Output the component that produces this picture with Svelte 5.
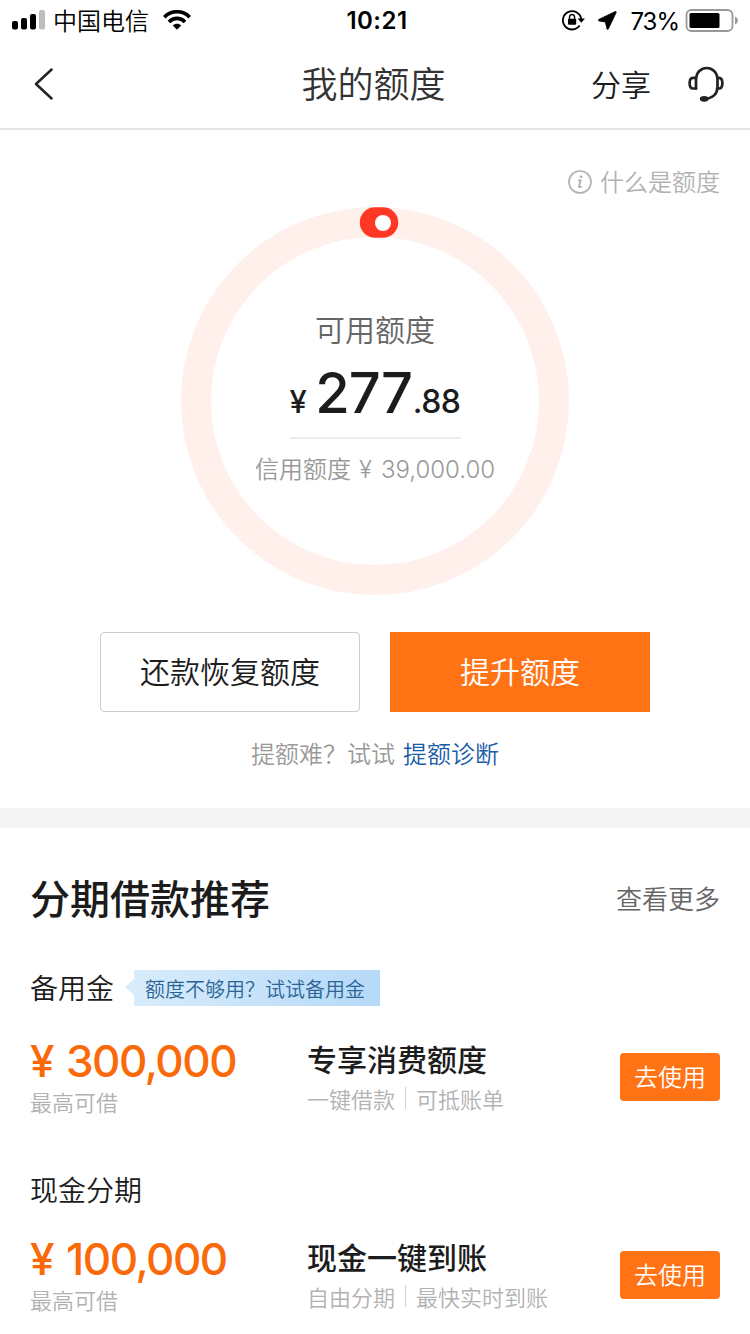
<script>
    let available = { whole: '277', cents: '.88' };

    let products = [
        {
            name: '备用金',
            tip: '额度不够用？试试备用金',
            amount: '300,000',
            title: '专享消费额度',
            tags: ['一键借款', '可抵账单'],
        },
        {
            name: '现金分期',
            tip: '',
            amount: '100,000',
            title: '现金一键到账',
            tags: ['自由分期', '最快实时到账'],
        },
    ];
</script>

<div class="page">
    <div class="status">
        <div class="status-left">
            <svg width="34" height="22" viewBox="0 0 34 22">
                <rect x="0" y="12" width="6" height="8.5" rx="2" />
                <rect x="9" y="9" width="6" height="11.5" rx="2" />
                <rect x="18" y="5" width="6" height="15.5" rx="2" />
                <rect x="27" y="1" width="6" height="19.5" rx="2" fill="#bdbdbd" />
            </svg>
            <span class="carrier">中国电信</span>
            <svg width="28" height="20" viewBox="0 0 28 20" fill="none" stroke="#000" stroke-width="3.6">
                <path d="M1.3 7.2 C8 -.1 20 -.1 26.7 7.2" />
                <path d="M6 12 C10.4 7.2 17.6 7.2 22 12" />
                <path d="M9.8 15.6 C12 13.2 16 13.2 18.2 15.6 L14 19.8 Z" fill="#000" stroke="none" />
            </svg>
        </div>
        <span class="time">10:21</span>
        <div class="status-right">
            <svg width="24" height="22" viewBox="0 0 24 22" fill="none" stroke="#000" stroke-width="1.8">
                <path d="M17.6 15.6 A9.2 9.2 0 1 1 19.2 9" />
                <path d="M15.6 8.5 H23 L19.3 12.8 Z" fill="#000" stroke="none" />
                <rect x="6" y="8.8" width="8.2" height="6" rx="1" fill="#000" stroke="none" />
                <path d="M7.5 9.4 V7.4 A2.5 2.8 0 0 1 12.6 7.4 V9.4" stroke-width="1.4" />
            </svg>
            <svg class="arrow" width="19" height="19" viewBox="0 0 19 19">
                <path d="M17.2 .6 L.8 8.4 Q-.1 9.6 1 10 L7.4 11 L9 18 Q9.6 19 10.3 18 L18.2 1.4 Q18.4 .2 17.2 .6 Z" stroke="#000" stroke-width=".8" />
            </svg>
            <span class="percent">73%</span>
            <svg width="54" height="24" viewBox="0 0 54 24">
                <rect x="1.5" y="1" width="46" height="21" rx="5" fill="none" stroke="#999" stroke-width="1.8" />
                <rect x="4.5" y="4" width="30" height="15" rx="1.5" />
                <path d="M50 7.5 Q53 9 53 11.5 Q53 14 50 15.5 Z" fill="#999" />
            </svg>
        </div>
    </div>

    <header>
        <button class="back" aria-label="返回">
            <svg width="22" height="34" viewBox="0 0 22 34" fill="none" stroke="#222" stroke-width="2.5" stroke-linecap="round" stroke-linejoin="round">
                <path d="M18.6 2.5 L3 17 L18.6 31.5" />
            </svg>
        </button>
        <h1>我的额度</h1>
        <div class="actions">
            <span>分享</span>
            <svg width="36" height="36" viewBox="0 0 36 36" fill="none" stroke="#222" stroke-width="2.7" stroke-linecap="round" stroke-linejoin="round">
                <path d="M8 22.5 V14 C8 -2 29.5 -2 29.5 14 V22 C29 28 24.5 32 17 33" />
                <path d="M8 11.8 H5 Q1.6 12 1.6 17 Q1.6 22.5 5 22.5 H8" />
                <path d="M29.5 11.8 H31 Q34.4 12 34.4 17 Q34.4 22.5 31 22.5 H29" />
                <ellipse cx="16.2" cy="32.8" rx="3" ry="1.5" fill="#222" />
            </svg>
        </div>
    </header>

    <section class="quota">
        <div class="help">
            <svg width="24" height="24" viewBox="0 0 24 24" fill="none" stroke="#b2b2b2" stroke-width="1.7">
                <circle cx="12" cy="12" r="11" />
                <path d="M10 10.3 H12.6 L11 16.7 Q11 17.8 14 16.5" stroke-width="1.8" />
                <circle cx="13" cy="6.8" r="1.4" fill="#b2b2b2" stroke="none" />
            </svg>
            <span>什么是额度</span>
        </div>

        <div class="gauge">
            <svg class="ring" width="390" height="390" viewBox="0 0 390 390" fill="none">
                <circle cx="195" cy="195" r="179" stroke="#fff0ec" stroke-width="30" />
                <path d="M195 16.5 H203" stroke="#fe3824" stroke-width="30.5" stroke-linecap="round" />
                <circle cx="203" cy="17" r="8" fill="#fff" />
            </svg>
            <div class="balance">
                <div class="label">可用额度</div>
                <div class="money">
                    <span class="sign">¥</span>
                    <span class="whole">{available.whole}</span>
                    <span class="cents">{available.cents}</span>
                </div>
                <div class="total">信用额度<span class="total-sign">¥</span><span class="total-num">39,000.00</span></div>
            </div>
        </div>

        <div class="buttons">
            <button class="plain">还款恢复额度</button>
            <button class="primary">提升额度</button>
        </div>
        <p class="hint">提额难？试试<a href="#diagnose">提额诊断</a></p>
    </section>

    <section class="loans">
        <div class="loans-head">
            <h2>分期借款推荐</h2>
            <span>查看更多</span>
        </div>
        {#each products as product}
            <article>
                <div class="name">
                    <span>{product.name}</span>
                    {#if product.tip}
                        <svg class="beak" width="9" height="16" viewBox="0 0 9 16"><path d="M0 8 L9 0 V16 Z" fill="#d8ecfb" /></svg>
                        <span class="tip">{product.tip}</span>
                    {/if}
                </div>
                <div class="row">
                    <div class="limit">
                        <div class="amount"><span>¥</span>{product.amount}</div>
                        <div class="note">最高可借</div>
                    </div>
                    <div class="info">
                        <div class="title">{product.title}</div>
                        <div class="tags">
                            <span>{product.tags[0]}</span>
                            <i></i>
                            <span>{product.tags[1]}</span>
                        </div>
                    </div>
                    <button class="use">去使用</button>
                </div>
            </article>
        {/each}
    </section>
</div>

<style>
    :global(body) {
        margin: 0;
        background: #fff;
    }

    .page {
        width: 750px;
        height: 1334px;
        overflow: hidden;
        background: #fff;
        color: #1c1c1c;
        font-family: 'Noto Sans CJK SC', sans-serif;
        font-weight: 350;
    }

    .page * {
        box-sizing: border-box;
    }

    svg {
        display: block;
        flex: none;
    }

    button {
        padding: 0;
        border: 0;
        background: none;
        font: inherit;
        cursor: pointer;
    }

    .status {
        display: grid;
        grid-template-columns: 1fr auto 1fr;
        align-items: center;
        height: 40px;
        padding: 0 11px 0 12px;
        color: #000;
    }

    .status-left,
    .status-right {
        display: flex;
        align-items: center;
    }

    .status-right {
        justify-content: flex-end;
        padding-top: 1px;
    }

    .carrier {
        margin: 0 14px 0 7px;
        font-size: 24px;
        line-height: 40px;
    }

    .time {
        padding: 1px 0 0 3px;
        font-family: Inter, sans-serif;
        font-size: 24px;
        font-weight: 600;
        letter-spacing: 0.5px;
    }

    .arrow {
        margin: 0 13px 0 12px;
    }

    .percent {
        margin-right: 6px;
        padding-top: 1px;
        font-family: Inter, sans-serif;
        font-size: 24px;
        font-weight: 400;
        letter-spacing: -1px;
    }

    header {
        display: grid;
        grid-template-columns: 1fr auto 1fr;
        align-items: center;
        height: 90px;
        padding: 0 26px 0 33px;
        border-bottom: 2px solid #e5e5e5;
    }

    h1 {
        margin: 0 10px 0 0;
        padding-bottom: 4px;
        font-size: 36px;
        font-weight: 350;
        line-height: 82px;
        color: #333;
    }

    .back {
        justify-self: start;
    }

    .actions {
        display: flex;
        justify-content: flex-end;
        align-items: center;
        gap: 37px;
        font-size: 30px;
    }

    .actions span {
        padding-bottom: 2px;
    }

    .quota {
        display: flow-root;
        height: 698px;
        border-bottom: 20px solid #f4f4f4;
    }

    .help {
        display: flex;
        justify-content: flex-end;
        align-items: center;
        gap: 8px;
        height: 36px;
        margin: 34px 30px 0;
        font-size: 24px;
        line-height: 32px;
        color: #b2b2b2;
    }

    .help span {
        padding-bottom: 2px;
    }

    .gauge {
        display: grid;
        justify-items: center;
        height: 390px;
        margin-top: 6px;
    }

    .ring,
    .balance {
        grid-area: 1 / 1;
    }

    .balance {
        display: flex;
        flex-direction: column;
        align-items: center;
        padding-top: 100px;
    }

    .label {
        font-size: 30px;
        line-height: 44px;
        color: #666;
    }

    .money {
        display: flex;
        align-items: baseline;
        width: 171px;
        height: 89px;
        border-bottom: 2px solid #ececec;
        font-family: Inter, sans-serif;
        font-weight: 500;
        line-height: 86px;
        white-space: nowrap;
    }

    .sign {
        width: 26px;
        font-size: 31px;
        font-weight: 450;
    }

    .whole {
        width: 98px;
        font-size: 56px;
        letter-spacing: -1px;
    }

    .cents {
        font-size: 32px;
        font-weight: 450;
        letter-spacing: -0.5px;
    }

    .total {
        display: flex;
        align-items: baseline;
        margin-top: 11px;
        font-size: 24px;
        line-height: 36px;
        color: #999;
        white-space: nowrap;
    }

    .total-sign,
    .total-num {
        font-family: Inter, sans-serif;
        font-weight: 300;
    }

    .total-sign {
        width: 22px;
        margin-left: 8px;
    }

    .buttons {
        display: flex;
        justify-content: center;
        gap: 30px;
        margin-top: 36px;
    }

    .plain,
    .primary {
        width: 260px;
        height: 80px;
        padding-bottom: 4px;
        font-size: 30px;
        line-height: 74px;
    }

    .plain {
        border: 1px solid #ccc;
        border-radius: 4px;
        color: #1c1c1c;
    }

    .primary {
        background: #ff7315;
        color: #fff;
    }

    .hint {
        margin: 23px 0 0;
        font-size: 24px;
        line-height: 36px;
        text-align: center;
        color: #999;
    }

    .hint a {
        margin-left: 8px;
        color: #1a5ca8;
        text-decoration: none;
    }

    .loans {
        padding: 39px 30px 0;
    }

    .loans-head {
        display: flex;
        justify-content: space-between;
        align-items: center;
        height: 60px;
        font-size: 26px;
        color: #666;
    }

    h2 {
        margin: 0;
        font-size: 40px;
        font-weight: 500;
        line-height: 60px;
        color: #1c1c1c;
    }

    article {
        margin-top: 40px;
    }

    .name {
        display: flex;
        align-items: center;
        height: 40px;
        font-size: 28px;
    }

    .beak {
        margin-left: 11px;
    }

    .tip {
        width: 246px;
        height: 36px;
        margin-top: 2px;
        padding-left: 11px;
        background: linear-gradient(90deg, #d8ecfb, #b6d9f8);
        font-size: 20px;
        line-height: 37px;
        color: #2b6596;
        white-space: nowrap;
    }

    .row {
        display: flex;
        align-items: flex-start;
        height: 118px;
        padding-top: 30px;
    }

    article + article {
        margin-top: 44px;
    }

    article + article .row {
        padding-top: 26px;
    }

    .limit {
        width: 277px;
        padding-top: 1px;
    }

    .amount {
        font-family: Inter, sans-serif;
        font-size: 44px;
        font-weight: 450;
        line-height: 46px;
        letter-spacing: -1.5px;
        color: #fa6a0a;
        white-space: nowrap;
    }

    .amount span {
        display: inline-block;
        width: 36px;
    }

    .note {
        font-size: 22px;
        line-height: 34px;
        color: #b2b2b2;
    }

    .info {
        flex: 1;
    }

    .title {
        font-size: 30px;
        font-weight: 500;
        line-height: 42px;
    }

    .tags {
        display: flex;
        align-items: center;
        height: 38px;
        font-size: 22px;
        color: #b2b2b2;
    }

    .tags i {
        width: 1px;
        height: 22px;
        margin: 0 10px;
        background: #d0d0d0;
    }

    .use {
        width: 100px;
        height: 48px;
        margin-top: 16px;
        padding-bottom: 3px;
        border-radius: 4px;
        background: #ff7315;
        font-size: 24px;
        line-height: 45px;
        color: #fff;
    }
</style>
